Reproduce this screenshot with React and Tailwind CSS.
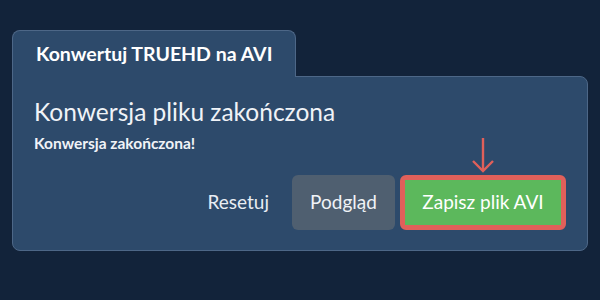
export default function App() {
    return (
        <div
            className="w-[600px] h-[300px] bg-[#12233a] pt-[30px] px-[12px]"
            style={{ fontFamily: 'Lato, "Noto Sans", sans-serif' }}
        >
            <div className="relative z-10 -mb-px flex h-[47px] w-[284px] items-center rounded-t-lg border border-b-0 border-[#4d6787] bg-[#2d4a6b] pl-[23px]">
                <span className="text-[19.5px] font-bold text-white">Konwertuj TRUEHD na AVI</span>
            </div>
            <div className="flex h-[175px] flex-col rounded-b-lg rounded-tr-lg border border-[#4d6787] bg-[#2d4a6b] px-[21px] pt-[17px] pb-[20px]">
                <h2 className="text-[24.5px] leading-[36px] text-[#f0f3f7]">Konwersja pliku zakończona</h2>
                <p className="mt-[2px] text-[15.5px] font-bold leading-[22px] text-[#f0f3f7]">Konwersja zakończona!</p>
                <div className="mt-auto flex items-center justify-end">
                    <button className="mr-[23px] text-[19px] text-[#e8edf3]">Resetuj</button>
                    <button className="h-[55px] w-[103px] rounded-md bg-[#4f5f70] text-[19px] text-[#f0f3f7]">Podgląd</button>
                    <div className="relative ml-[5px]">
                        <svg
                            className="absolute left-1/2 -translate-x-1/2 -top-[38px]"
                            width="24"
                            height="36"
                            viewBox="0 0 24 36"
                            fill="none"
                            stroke="#e0605a"
                            strokeWidth="2.4"
                        >
                            <path d="M12 1 V34" />
                            <path d="M2 24 L12 34 L22 24" />
                        </svg>
                        <div className="rounded-md border-[5px] border-[#e0605a]">
                            <button className="block h-[45px] w-[156px] bg-[#5cb85c] text-[19px] text-white">Zapisz plik AVI</button>
                        </div>
                    </div>
                </div>
            </div>
        </div>
    );
}
